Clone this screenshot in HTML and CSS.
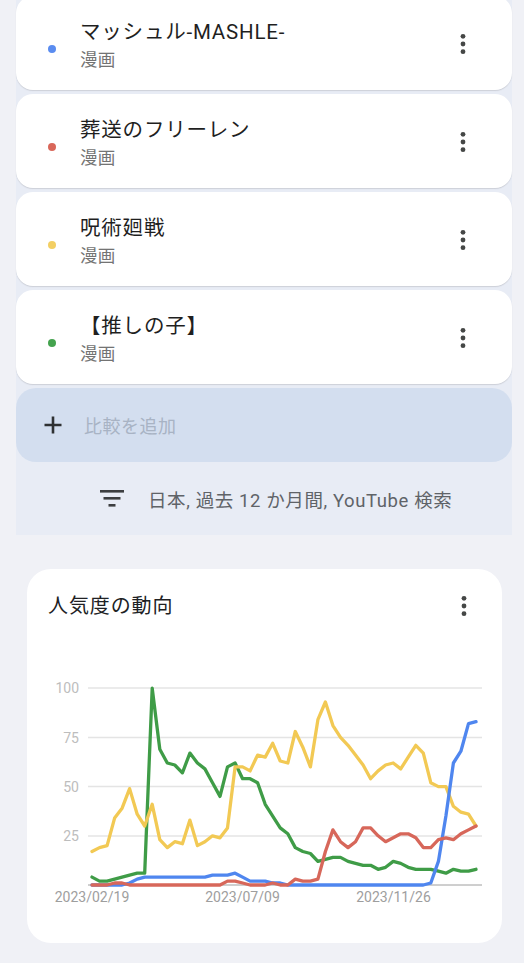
FILE: index.html
```html
<!DOCTYPE html>
<html lang="ja">
<head>
<meta charset="utf-8">
<title>Trends</title>
<link rel="stylesheet" href="styles.css">
</head>
<body>
<section class="panel">
  <div class="terms">
    <div class="term">
      <span class="dot dot-blue"></span>
      <div class="term-text"><div class="term-title">マッシュル-MASHLE-</div><div class="term-sub">漫画</div></div>
      <svg class="kebab" viewBox="0 0 24 24"><circle cx="12" cy="4.3" r="2.4"/><circle cx="12" cy="12" r="2.4"/><circle cx="12" cy="19.7" r="2.4"/></svg>
    </div>
    <div class="term">
      <span class="dot dot-red"></span>
      <div class="term-text"><div class="term-title">葬送のフリーレン</div><div class="term-sub">漫画</div></div>
      <svg class="kebab" viewBox="0 0 24 24"><circle cx="12" cy="4.3" r="2.4"/><circle cx="12" cy="12" r="2.4"/><circle cx="12" cy="19.7" r="2.4"/></svg>
    </div>
    <div class="term">
      <span class="dot dot-yellow"></span>
      <div class="term-text"><div class="term-title">呪術廻戦</div><div class="term-sub">漫画</div></div>
      <svg class="kebab" viewBox="0 0 24 24"><circle cx="12" cy="4.3" r="2.4"/><circle cx="12" cy="12" r="2.4"/><circle cx="12" cy="19.7" r="2.4"/></svg>
    </div>
    <div class="term">
      <span class="dot dot-green"></span>
      <div class="term-text"><div class="term-title">【推しの子】</div><div class="term-sub">漫画</div></div>
      <svg class="kebab" viewBox="0 0 24 24"><circle cx="12" cy="4.3" r="2.4"/><circle cx="12" cy="12" r="2.4"/><circle cx="12" cy="19.7" r="2.4"/></svg>
    </div>
    <div class="add">
      <svg class="plus" viewBox="0 0 20 20"><path d="M10 1.5v17M1.5 10h17"/></svg>
      <span class="add-label">比較を追加</span>
    </div>
  </div>
  <div class="filter">
    <svg class="filter-icon" viewBox="0 0 24 18"><rect x="0" y="0" width="24" height="2.6"/><rect x="3.5" y="7" width="17" height="2.6"/><rect x="8.5" y="14" width="7" height="2.6"/></svg>
    <span class="filter-label">日本, 過去 12 か月間, YouTube 検索</span>
  </div>
</section>

<section class="chart-card">
  <div class="chart-head">
    <h2 class="chart-title">人気度の動向</h2>
    <svg class="kebab" viewBox="0 0 24 24"><circle cx="12" cy="4.3" r="2.4"/><circle cx="12" cy="12" r="2.4"/><circle cx="12" cy="19.7" r="2.4"/></svg>
  </div>
  <svg class="chart" viewBox="27 649 475 260" width="475" height="260">
    <g class="grid">
      <line x1="88" y1="688" x2="482" y2="688"/>
      <line x1="88" y1="737.5" x2="482" y2="737.5"/>
      <line x1="88" y1="786.5" x2="482" y2="786.5"/>
      <line x1="88" y1="836" x2="482" y2="836"/>
    </g>
    <line class="axis" x1="88" y1="885" x2="482" y2="885"/>
    <g class="ylabels">
      <text x="79" y="693">100</text>
      <text x="79" y="742.5">75</text>
      <text x="79" y="791.5">50</text>
      <text x="79" y="841">25</text>
    </g>
    <g class="xlabels">
      <text x="92" y="902">2023/02/19</text>
      <text x="242.5" y="902">2023/07/09</text>
      <text x="393.5" y="902">2023/11/26</text>
    </g>
    <polyline id="green" class="series s-green" points=""/>
    <polyline id="yellow" class="series s-yellow" points=""/>
    <polyline id="blue" class="series s-blue" points=""/>
    <polyline id="red" class="series s-red" points=""/>
  </svg>
</section>
<script src="script.js"></script>
</body>
</html>
```

FILE: styles.css
```css
* { box-sizing: border-box; }
html, body { margin: 0; padding: 0; }
body {
  background: #f0f1f6;
  font-family: Roboto, "Noto Sans CJK JP", sans-serif;
  color: #1f1f1f;
  width: 524px;
  height: 963px;
  overflow: hidden;
}
.panel {
  margin: -4px 12px 0 16px;
  background: #e8ecf5;
}
.terms {
  display: flex;
  flex-direction: column;
  gap: 4px;
}
.term {
  height: 94px;
  background: #ffffff;
  border-radius: 17px;
  box-shadow: 0 1px 1px rgba(60, 64, 67, 0.16);
  display: flex;
  align-items: flex-start;
  padding: 22px 37px 0 32px;
}
.dot {
  width: 8px;
  height: 8px;
  border-radius: 50%;
  margin-top: 27px;
  flex: none;
}
.dot-blue { background: #5a8cf0; }
.dot-red { background: #d9675a; }
.dot-yellow { background: #f3cf63; }
.dot-green { background: #44a34e; }
.term-text {
  flex: 1;
  margin-left: 24px;
}
.term-title {
  font-size: 20.5px;
  line-height: 28px;
  letter-spacing: 0.8px;
  color: #1f1f1f;
}
.term-sub {
  font-size: 17.5px;
  line-height: 28px;
  letter-spacing: 0.3px;
  color: #737373;
}
.kebab {
  width: 24px;
  height: 24px;
  flex: none;
  fill: #454746;
}
.term .kebab { margin-top: 14px; }
.add {
  height: 74px;
  background: #d3deef;
  border-radius: 20px;
  display: flex;
  align-items: center;
  padding-left: 27px;
}
.plus {
  width: 20px;
  height: 20px;
  stroke: #2f3133;
  stroke-width: 2.6;
  fill: none;
}
.add-label {
  margin-left: 21px;
  font-size: 18px;
  letter-spacing: 0.5px;
  color: #a8b3c4;
}
.filter {
  height: 73px;
  display: flex;
  align-items: center;
  padding-left: 84px;
}
.filter-icon {
  width: 24px;
  height: 18px;
  fill: #3c3e40;
}
.filter-label {
  margin-left: 24px;
  font-size: 18.5px;
  letter-spacing: 0.6px;
  color: #5f6368;
}
.chart-card {
  margin: 34px 22px 0 27px;
  height: 374px;
  background: #ffffff;
  border-radius: 24px;
  padding-top: 23px;
}
.chart-head {
  height: 28px;
  display: flex;
  align-items: center;
  justify-content: space-between;
  padding: 0 26px 0 21px;
}
.chart-title {
  margin: 0;
  font-size: 20px;
  font-weight: 400;
  line-height: 28px;
  letter-spacing: 0.9px;
  color: #202124;
}
.chart {
  display: block;
  margin-top: 29px;
}
.grid line {
  stroke: #e4e4e4;
  stroke-width: 1.5;
}
.axis {
  stroke: #9e9e9e;
  stroke-width: 1;
}
.ylabels text {
  font-family: Roboto, sans-serif;
  font-size: 14px;
  fill: #bdbdbd;
  text-anchor: end;
}
.xlabels text {
  font-family: Roboto, sans-serif;
  font-size: 14px;
  fill: #9e9e9e;
  text-anchor: middle;
}
.series {
  fill: none;
  stroke-width: 3.3;
  stroke-linejoin: round;
  stroke-linecap: round;
}
.s-green { stroke: #3f9c47; }
.s-yellow { stroke: #f2c954; }
.s-blue { stroke: #4f86ef; }
.s-red { stroke: #d7675a; }
```

FILE: script.js
```js
(function () {
  var data = {
    green: [4, 2, 2, 3, 4, 5, 6, 6, 100, 69, 62, 61, 57, 67, 62, 59, 52, 45, 60, 62, 54, 54, 52, 41, 35, 29, 26, 19, 17, 16, 12, 13, 14, 14, 12, 11, 10, 10, 8, 9, 12, 11, 9, 8, 8, 8, 7, 6, 8, 7, 7, 8],
    yellow: [17, 19, 20, 34, 39, 49, 36, 30, 41, 23, 19, 22, 21, 33, 20, 22, 25, 24, 29, 60, 60, 58, 66, 65, 72, 63, 62, 78, 70, 60, 84, 93, 81, 75, 71, 66, 61, 54, 58, 61, 62, 59, 65, 71, 67, 52, 50, 50, 40, 37, 36, 30],
    blue: [0, 0, 0, 0, 0, 1, 3, 4, 4, 4, 4, 4, 4, 4, 4, 4, 5, 5, 5, 6, 4, 2, 2, 2, 1, 1, 0, 0, 0, 0, 0, 0, 0, 0, 0, 0, 0, 0, 0, 0, 0, 0, 0, 0, 0, 1, 12, 35, 62, 68, 82, 83],
    red: [0, 0, 0, 1, 1, 0, 0, 0, 0, 0, 0, 0, 0, 0, 0, 0, 0, 0, 2, 2, 1, 0, 0, 0, 1, 0, 0, 3, 2, 2, 3, 17, 28, 22, 19, 22, 29, 29, 25, 22, 24, 26, 26, 24, 19, 19, 23, 24, 23, 26, 28, 30]
  };
  var x0 = 92, x1 = 476, y0 = 885, k = 1.968;
  Object.keys(data).forEach(function (id) {
    var vals = data[id];
    var n = vals.length;
    var pts = vals.map(function (v, i) {
      var x = x0 + i * (x1 - x0) / (n - 1);
      var y = y0 - v * k;
      return x.toFixed(1) + ',' + y.toFixed(1);
    }).join(' ');
    document.getElementById(id).setAttribute('points', pts);
  });
})();
```
